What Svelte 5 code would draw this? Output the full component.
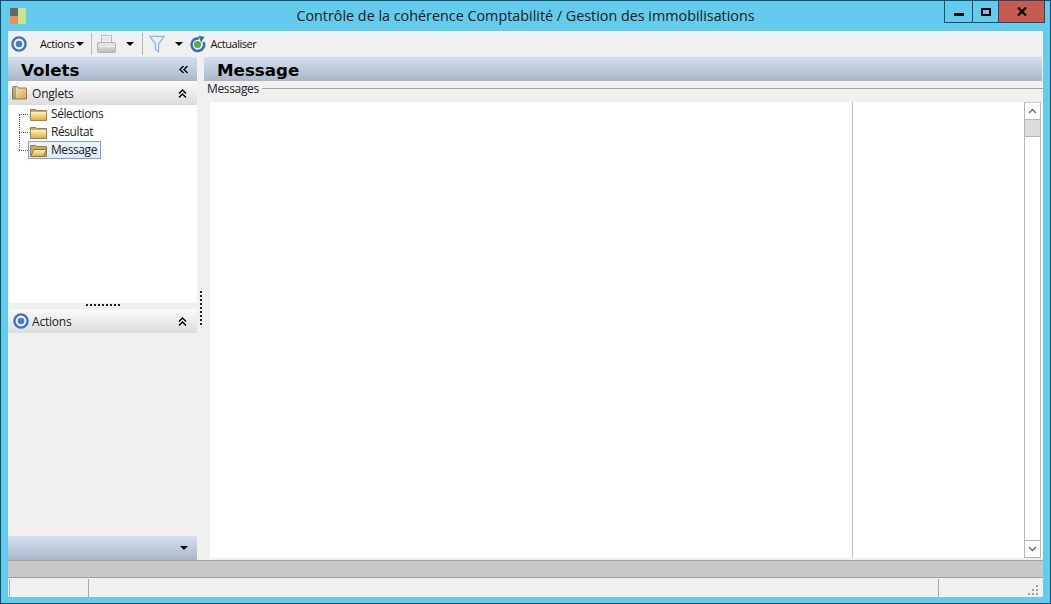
<script lang="ts">
    const tabs = [
        { label: "Sélections", open: false, selected: false },
        { label: "Résultat", open: false, selected: false },
        { label: "Message", open: true, selected: true },
    ];
</script>

{#snippet target()}
    <svg class="ico" width="18" height="18" viewBox="0 0 18 18">
        <circle cx="9" cy="9" r="6.6" fill="#eef2fa" stroke="#3f74bd" stroke-width="2.4" />
        <circle cx="9" cy="9" r="3.3" fill="#4a7fc8" />
    </svg>
{/snippet}

{#snippet folder(open: boolean)}
    <svg class="ico" width="17" height="13" viewBox="0 0 17 13">
        <defs>
            <linearGradient id="fold" x1="0" y1="0" x2="0" y2="1">
                <stop offset="0" stop-color="#fff3bf" />
                <stop offset="1" stop-color="#e3ad42" />
            </linearGradient>
        </defs>
        <path d="M0.5 12.5V1.5H6L7 2.5H16.5V12.5Z" fill="#c9a862" stroke="#97824f" />
        {#if open}
            <path d="M0.5 12.5L4 5.5H16.5L13.5 12.5Z" fill="url(#fold)" stroke="#8c7440" />
        {:else}
            <rect x="1" y="4" width="15" height="8" fill="url(#fold)" />
        {/if}
    </svg>
{/snippet}

{#snippet tabFolder()}
    <svg class="ico" width="15" height="14" viewBox="0 0 15 14">
        <defs>
            <linearGradient id="tabfold" x1="0" y1="0" x2="1" y2="1">
                <stop offset="0" stop-color="#fbeec0" />
                <stop offset="1" stop-color="#d5a650" />
            </linearGradient>
        </defs>
        <path d="M0.5 13V1.5Q0.5 0.5 1.5 0.5H5L6 2H13.5Q14.5 2 14.5 3V13Z" fill="url(#tabfold)" stroke="#8d7a50" />
        <rect x="1" y="1" width="3" height="12" fill="#8a7a58" opacity="0.55" />
    </svg>
{/snippet}

{#snippet chevrons()}
    <svg class="ico" width="9" height="9" viewBox="0 0 9 9" fill="none" stroke="#000" stroke-width="1.4">
        <path d="M1 4.5L4.5 1L8 4.5M1 8.5L4.5 5L8 8.5" />
    </svg>
{/snippet}

{#snippet caret()}
    <span class="caret"></span>
{/snippet}

<div class="window">
    <header class="titlebar">
        <svg class="logo" width="16" height="16" viewBox="0 0 16 16">
            <rect x="0" y="0" width="8" height="8" fill="#666" />
            <rect x="0" y="8" width="8" height="8" fill="#ef8d5c" />
            <rect x="8" y="0" width="8" height="16" fill="#c9e58c" />
        </svg>
        <div class="title">Contrôle de la cohérence Comptabilité / Gestion des immobilisations</div>
        <div class="controls">
            <div class="ctl min"><span></span></div>
            <div class="ctl max"><span></span></div>
            <div class="ctl close">
                <svg width="10" height="9" viewBox="0 0 10 9" fill="none" stroke="#000" stroke-width="2.2">
                    <path d="M1 0.5L9 8.5M9 0.5L1 8.5" />
                </svg>
            </div>
        </div>
    </header>

    <div class="client">
        <div class="toolbar">
            {@render target()}
            <span class="tb-label actions">Actions</span>
            {@render caret()}
            <span class="sep"></span>
            <svg class="ico printer" width="19" height="18" viewBox="0 0 19 18">
                <defs>
                    <linearGradient id="prn" x1="0" y1="0" x2="0" y2="1">
                        <stop offset="0" stop-color="#ececec" />
                        <stop offset="1" stop-color="#bcbcbc" />
                    </linearGradient>
                </defs>
                <rect x="4.5" y="0.5" width="10" height="8" fill="#f6f6f6" stroke="#bbb" />
                <path d="M5.5 3H13M5.5 5H13" stroke="#d5d5d5" />
                <path d="M0.5 9Q0.5 7.5 2 7.5H17Q18.5 7.5 18.5 9V16Q18.5 17.5 17 17.5H2Q0.5 17.5 0.5 16Z" fill="url(#prn)" stroke="#b0b0b0" />
                <rect x="1" y="11" width="17" height="1" fill="#f2f2f2" />
            </svg>
            {@render caret()}
            <span class="sep second"></span>
            <svg class="ico funnel" width="16" height="18" viewBox="0 0 17 18">
                <path d="M0.8 0.8H16.2L10.2 9V17.2L6.8 14.5V9Z" fill="#e6f1fb" stroke="#8db2d8" stroke-width="1.3" />
            </svg>
            {@render caret()}
            <svg class="ico refresh" width="17" height="18" viewBox="0 0 17 18">
                <path d="M10 3.5A6.3 6.3 0 1 0 14.5 7" fill="#eaf0f8" stroke="#3a6fb0" stroke-width="2.6" />
                <circle cx="8.5" cy="9.5" r="3.5" fill="#4fae48" />
                <path d="M9.5 0.5L15.5 2L12 7.5Z" fill="#3a6fb0" />
            </svg>
            <span class="tb-label refresh-label">Actualiser</span>
        </div>

        <div class="body">
            <aside class="left">
                <div class="pane-head">
                    <span>Volets</span>
                    <svg class="ico" width="9" height="9" viewBox="0 0 9 9" fill="none" stroke="#000" stroke-width="1.3">
                        <path d="M4.5 1L1 4.5L4.5 8M8.5 1L5 4.5L8.5 8" />
                    </svg>
                </div>
                <div class="group-head">
                    <span class="group-ico">{@render tabFolder()}</span>
                    <span class="group-label">Onglets</span>
                    {@render chevrons()}
                </div>
                <div class="tree">
                    <span class="tree-trunk"></span>
                    {#each tabs as tab}
                        <div class="node">
                            <span class="tick"></span>
                            <div class="node-box" class:selected={tab.selected}>
                                {@render folder(tab.open)}
                                <span>{tab.label}</span>
                            </div>
                        </div>
                    {/each}
                </div>
                <div class="grip"><span></span></div>
                <div class="group-head">
                    <span class="group-ico">{@render target()}</span>
                    <span class="group-label">Actions</span>
                    {@render chevrons()}
                </div>
                <div class="fill"></div>
                <div class="pane-foot"><span class="caret"></span></div>
            </aside>

            <div class="splitter"><span></span></div>

            <main class="right">
                <div class="pane-head msg"><span>Message</span></div>
                <div class="legend"><span>Messages</span><i></i></div>
                <div class="list">
                    <div class="col first"></div>
                    <div class="col second"></div>
                    <div class="scrollbar">
                        <div class="arrow">
                            <svg width="9" height="6" viewBox="0 0 9 6" fill="none" stroke="#666" stroke-width="1.4">
                                <path d="M1 5L4.5 1.5L8 5" />
                            </svg>
                        </div>
                        <div class="thumb"></div>
                        <div class="track"></div>
                        <div class="arrow down">
                            <svg width="9" height="6" viewBox="0 0 9 6" fill="none" stroke="#666" stroke-width="1.4">
                                <path d="M1 1L4.5 4.5L8 1" />
                            </svg>
                        </div>
                    </div>
                </div>
            </main>
        </div>

        <div class="hbar"></div>

        <footer class="status">
            <div class="cell a"></div>
            <div class="cell b"></div>
            <div class="cell c">
                <svg class="sizegrip" width="12" height="12" viewBox="0 0 12 12" fill="#a3a3a3">
                    <rect x="9" y="1" width="2" height="2" />
                    <rect x="5" y="5" width="2" height="2" />
                    <rect x="9" y="5" width="2" height="2" />
                    <rect x="1" y="9" width="2" height="2" />
                    <rect x="5" y="9" width="2" height="2" />
                    <rect x="9" y="9" width="2" height="2" />
                </svg>
            </div>
        </footer>
    </div>
</div>

<style>
    :global(body) {
        margin: 0;
        background: #63cbec;
    }

    .window {
        width: 1051px;
        height: 604px;
        box-sizing: border-box;
        border: 1px solid #1d4c62;
        background: #63cbec;
        display: flex;
        flex-direction: column;
        overflow: hidden;
        font-family: "Open Sans", "Noto Sans", sans-serif;
        color: #000;
    }

    .titlebar {
        height: 30px;
        flex: none;
        display: flex;
        align-items: flex-start;
        position: relative;
    }

    .logo {
        margin: 7px 0 0 9px;
    }

    .title {
        position: absolute;
        left: 0;
        right: 0;
        top: 4px;
        text-align: center;
        font-size: 14.35px;
        line-height: 22px;
        color: #1a1a1a;
    }

    .controls {
        margin-left: auto;
        margin-right: 5px;
        display: flex;
        height: 21px;
        border: 1px solid #27495a;
        border-top: none;
        position: relative;
    }

    .ctl {
        display: flex;
        align-items: center;
        justify-content: center;
    }

    .min {
        width: 27px;
        border-right: 1px solid #27495a;
    }

    .min span {
        width: 10px;
        height: 3px;
        background: #000;
        margin-top: 5px;
    }

    .max {
        width: 25px;
        border-right: 1px solid #27495a;
    }

    .max span {
        width: 6px;
        height: 4px;
        border: 2px solid #000;
    }

    .close {
        width: 45px;
        background: #c75b50;
    }

    .client {
        margin: 0 7px 6px 7px;
        flex: 1;
        min-height: 0;
        display: flex;
        flex-direction: column;
        background: #f0f0f0;
    }

    .toolbar {
        height: 26px;
        flex: none;
        display: flex;
        align-items: center;
        padding-left: 2px;
        background: #f0f0f0;
    }

    .ico {
        display: block;
        flex: none;
    }

    .tb-label {
        font-family: "Open Sans", sans-serif;
        font-size: 11px;
        letter-spacing: -0.45px;
        color: #111;
        margin-top: -2px;
    }

    .actions {
        margin-left: 12px;
    }

    .caret {
        display: inline-block;
        width: 0;
        height: 0;
        border-left: 4px solid transparent;
        border-right: 4px solid transparent;
        border-top: 4px solid #000;
        margin-left: 2px;
    }

    .sep {
        width: 1px;
        height: 22px;
        background: #b9b9b9;
        margin: 0 5px 0 7px;
    }

    .sep.second {
        margin: 0 6px 0 8px;
    }

    .printer + .caret {
        margin-left: 10px;
    }

    .funnel + .caret {
        margin-left: 10px;
    }

    .refresh {
        margin-left: 6px;
        margin-top: -1px;
    }

    .refresh-label {
        margin-left: 4px;
    }

    .body {
        flex: 1;
        min-height: 0;
        display: flex;
    }

    .left {
        width: 189px;
        flex: none;
        display: flex;
        flex-direction: column;
    }

    .pane-head {
        height: 24px;
        flex: none;
        display: flex;
        align-items: center;
        justify-content: space-between;
        padding: 0 9px 0 13px;
        background: linear-gradient(#d2e0ef, #a9b7c6);
        font-family: "DejaVu Sans", sans-serif;
        font-weight: bold;
        font-size: 16.7px;
    }

    .pane-head span {
        margin-top: 2px;
    }

    .pane-foot {
        height: 24px;
        flex: none;
        display: flex;
        align-items: center;
        justify-content: flex-end;
        padding-right: 9px;
        background: linear-gradient(#d2e0ef, #a9b7c6);
    }

    .group-head {
        height: 24px;
        flex: none;
        display: flex;
        align-items: center;
        padding-right: 10px;
        background: linear-gradient(#fbfbfb, #dcdcdc);
    }

    .group-ico {
        margin-left: 4px;
        width: 20px;
        flex: none;
    }

    .group-label {
        flex: 1;
        font-size: 12px;
        letter-spacing: -0.2px;
        color: #222;
    }

    .tree {
        height: 198px;
        flex: none;
        background: #fff;
        position: relative;
    }

    .tree-trunk {
        position: absolute;
        left: 11px;
        top: 9px;
        height: 36px;
        border-left: 1px dotted #555;
    }

    .node {
        height: 18px;
        display: flex;
        align-items: center;
    }

    .tick {
        width: 9px;
        margin-left: 11px;
        border-top: 1px dotted #555;
    }

    .node-box {
        display: flex;
        align-items: center;
        height: 16px;
        padding: 0 3px 0 1px;
        border: 1px solid transparent;
        font-size: 12px;
        letter-spacing: -0.42px;
        color: #222;
    }

    .node-box span {
        margin: -2px 0 0 4px;
    }

    .node-box.selected {
        border-color: #7da2ce;
        background: linear-gradient(#edf4fc, #dfeafa);
    }

    .grip {
        height: 6px;
        flex: none;
        display: flex;
        justify-content: center;
        padding: 1px 0 0 1px;
        box-sizing: border-box;
        background: #f0f0f0;
    }

    .grip span {
        width: 35px;
        height: 2px;
        background-image: repeating-linear-gradient(90deg, #222 0 2px, transparent 2px 4px);
    }

    .fill {
        flex: 1;
        background: #f0f0f0;
    }

    .splitter {
        width: 7px;
        flex: none;
        position: relative;
    }

    .splitter span {
        position: absolute;
        left: 3px;
        top: 234px;
        width: 2px;
        height: 35px;
        background-image: repeating-linear-gradient(#222 0 2px, transparent 2px 4px);
    }

    .right {
        flex: 1;
        min-width: 0;
        display: flex;
        flex-direction: column;
    }

    .msg {
        margin-right: 1px;
    }

    .legend {
        height: 21px;
        flex: none;
        display: flex;
        align-items: flex-start;
        padding-left: 3px;
        font-size: 12px;
        letter-spacing: -0.35px;
        line-height: 16px;
        color: #222;
    }

    .legend i {
        flex: 1;
        height: 1px;
        margin: 7px 0 0 3px;
        background: #a5a5a5;
    }

    .list {
        flex: 1;
        min-height: 0;
        margin: 0 0 2px 6px;
        background: #fff;
        display: flex;
    }

    .col.first {
        width: 642px;
        border-right: 1px solid #bdbdbd;
    }

    .col.second {
        flex: 1;
    }

    .scrollbar {
        width: 17px;
        flex: none;
        margin-right: 2px;
        display: flex;
        flex-direction: column;
        border: 1px solid #b5b5b5;
        border-top: 1px solid #c8c8c8;
        box-sizing: border-box;
        background: #fff;
    }

    .arrow {
        height: 16px;
        flex: none;
        display: flex;
        align-items: center;
        justify-content: center;
    }

    .arrow.down {
        border-top: 1px solid #b5b5b5;
    }

    .thumb {
        height: 16px;
        flex: none;
        background: #dcdcdc;
        border-top: 1px solid #b5b5b5;
        border-bottom: 1px solid #b5b5b5;
    }

    .track {
        flex: 1;
    }

    .hbar {
        height: 16px;
        flex: none;
        background: #c8c8c8;
        border-top: 1px solid #a2a2a2;
        border-bottom: 1px solid #a2a2a2;
    }

    .status {
        height: 18px;
        flex: none;
        margin-top: 1px;
        display: flex;
        padding: 0 1px;
        background: #f0f0f0;
    }

    .cell {
        border-right: 1px solid #a9a9a9;
        position: relative;
    }

    .cell.a {
        width: 78px;
        border-left: 1px solid #a9a9a9;
    }

    .cell.b {
        flex: 1;
    }

    .cell.c {
        width: 103px;
        border-right: none;
    }

    .sizegrip {
        position: absolute;
        right: 3px;
        bottom: 1px;
    }
</style>
